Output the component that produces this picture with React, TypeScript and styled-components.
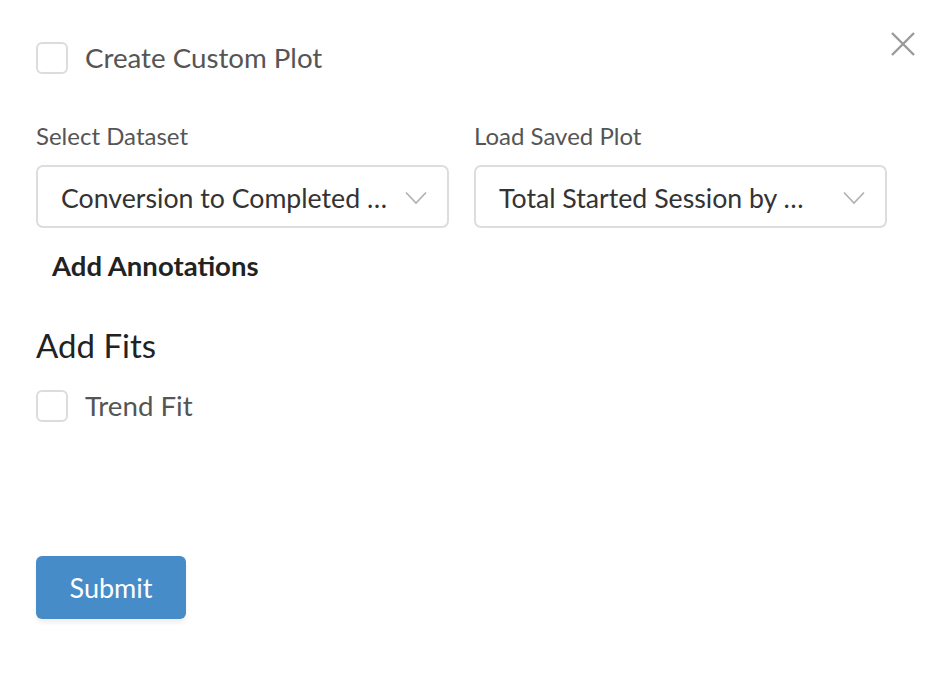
import React, { useState } from 'react';
import styled, { createGlobalStyle } from 'styled-components';

const GlobalStyle = createGlobalStyle`
  html, body {
    margin: 0;
    padding: 0;
    background: #ffffff;
    font-family: 'Lato', 'Noto Sans', sans-serif;
  }
`;

const Panel = styled.div`
  position: relative;
  width: 952px;
  height: 674px;
  box-sizing: border-box;
  padding: 42px 36px 0 36px;
`;

const CloseBtn = styled.button`
  position: absolute;
  top: 31px;
  right: 36px;
  width: 26px;
  height: 26px;
  padding: 0;
  border: none;
  background: transparent;
  cursor: pointer;
`;

const CheckRow = styled.label`
  display: flex;
  align-items: center;
  gap: 17px;
  cursor: pointer;
`;

const Box = styled.span<{ checked: boolean }>`
  width: 32px;
  height: 32px;
  box-sizing: border-box;
  border: 2px solid #dcdcdc;
  border-radius: 6px;
  background: ${(p) => (p.checked ? '#468cc8' : '#fff')};
  flex-shrink: 0;
`;

const CheckLabel = styled.span`
  font-size: 27.7px;
  color: #555555;
  line-height: 32px;
`;

const SelectRow = styled.div`
  display: grid;
  grid-template-columns: 413px 413px;
  column-gap: 25px;
  margin-top: 49px;
`;

const Field = styled.div`
  display: flex;
  flex-direction: column;
  gap: 16px;
`;

const FieldLabel = styled.div`
  font-size: 24px;
  line-height: 26px;
  color: #555555;
`;

const SelectBox = styled.div`
  height: 63px;
  box-sizing: border-box;
  border: 2px solid #dddddd;
  border-radius: 7px;
  display: flex;
  align-items: center;
  justify-content: space-between;
  padding: 2px 20px 0 23px;
  cursor: pointer;
`;

const SelectValue = styled.span`
  font-size: 26.7px;
  color: #333333;
  white-space: nowrap;
`;

const Annotations = styled.div`
  margin: 23px 0 0 16px;
  font-size: 27.5px;
  font-weight: 700;
  color: #222222;
  line-height: 30px;
`;

const SectionTitle = styled.h2`
  margin: 46px 0 27px;
  font-size: 33px;
  font-weight: 400;
  color: #222222;
  line-height: 36px;
`;

const SubmitButton = styled.button`
  margin-top: 134px;
  width: 150px;
  height: 63px;
  border: none;
  border-radius: 6px;
  background: #468cc8;
  color: #ffffff;
  font-family: inherit;
  font-size: 27px;
  box-shadow: 0 4px 4px rgba(0, 0, 0, 0.06);
  cursor: pointer;
`;

const Chevron = () => (
  <svg width="22" height="14" viewBox="0 0 22 14" fill="none">
    <path d="M1 1.5 L11 12 L21 1.5" stroke="#b0b0b0" strokeWidth="1.6" />
  </svg>
);

const Checkbox = ({ label }: { label: string }) => {
  const [checked, setChecked] = useState(false);
  return (
    <CheckRow onClick={() => setChecked(!checked)}>
      <Box checked={checked} />
      <CheckLabel>{label}</CheckLabel>
    </CheckRow>
  );
};

const App = () => {
  return (
    <Panel>
      <GlobalStyle />
      <CloseBtn>
        <svg width="26" height="26" viewBox="0 0 26 26">
          <path d="M2 2 L24 24 M24 2 L2 24" stroke="#9a9a9a" strokeWidth="2.4" />
        </svg>
      </CloseBtn>
      <Checkbox label="Create Custom Plot" />
      <SelectRow>
        <Field>
          <FieldLabel>Select Dataset</FieldLabel>
          <SelectBox>
            <SelectValue>Conversion to Completed …</SelectValue>
            <Chevron />
          </SelectBox>
        </Field>
        <Field>
          <FieldLabel>Load Saved Plot</FieldLabel>
          <SelectBox>
            <SelectValue>Total Started Session by …</SelectValue>
            <Chevron />
          </SelectBox>
        </Field>
      </SelectRow>
      <Annotations>Add Annotations</Annotations>
      <SectionTitle>Add Fits</SectionTitle>
      <Checkbox label="Trend Fit" />
      <SubmitButton>Submit</SubmitButton>
    </Panel>
  );
};

export default App;
